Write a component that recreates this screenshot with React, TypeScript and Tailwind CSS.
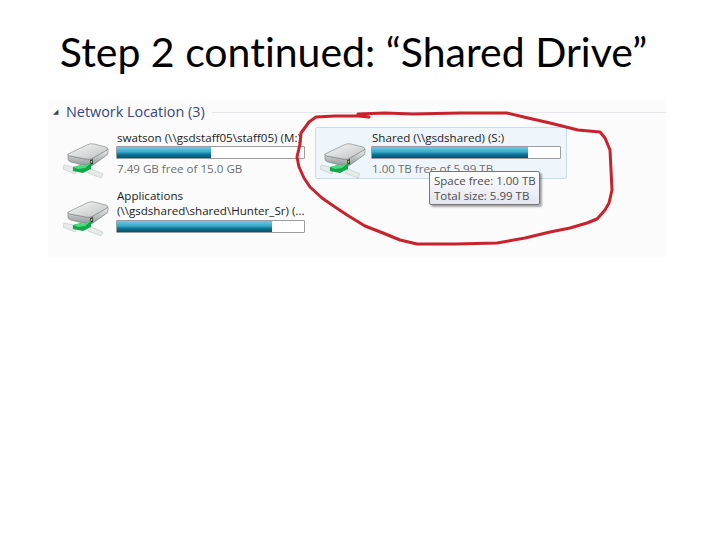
import React from "react";

const uiFont = "font-['Open_Sans','Noto_Sans',sans-serif]";

function DriveIcon() {
  return (
    <svg width="46" height="36" viewBox="0 0 46 36" className="mt-[13px] shrink-0">
      <defs>
        <linearGradient id="top" x1="0" y1="0" x2="1" y2="1">
          <stop offset="0" stopColor="#fafafa" />
          <stop offset="1" stopColor="#bcc0c0" />
        </linearGradient>
        <linearGradient id="side" x1="0" y1="0" x2="0" y2="1">
          <stop offset="0" stopColor="#f0f1f1" />
          <stop offset="1" stopColor="#8e9394" />
        </linearGradient>
      </defs>
      {/* network cable */}
      <path d="M1 22 L10 24 L10 28 L13 29 L12 31 L0 26Z" fill="#e6eaea" stroke="#b5bcbc" strokeWidth="0.5" />
      <path d="M28 26 L40 31 L38 35 L25 30Z" fill="#e6eaea" stroke="#b5bcbc" strokeWidth="0.5" />
      {/* disk */}
      <path d="M5 11 L5 16 Q5 18 8 19 L24 23 Q27 24 30 22 L44 12 Q45 11 45 9 L45 6 L30 15 Q27 17 23 16 L7 13Z" fill="url(#side)" stroke="#6e7475" strokeWidth="0.6" />
      <path d="M5 11 L24 2 Q27 0 31 1 L43 4 Q46 5 44 7 L30 15 Q27 17 23 16 L7 13 Q4 12 5 11Z" fill="url(#top)" stroke="#777d7e" strokeWidth="0.6" />
      <path d="M27 17 L30 16 L30 21 L27 22Z" fill="#333b35" />
      <path d="M27.8 18 L29.2 17.5 L29.2 19.5 L27.8 20Z" fill="#a6e070" />
      {/* green connector */}
      <path d="M10 24 L18 22 L20 23 L28 20 L28 26 L20 30 L10 28Z" fill="#12a84a" />
      <path d="M10 24 L18 22 L20 23 L28 20 L22 25 L15 26Z" fill="#49dc7e" />
    </svg>
  );
}

function Bar({ fill }: { fill: string }) {
  return (
    <div className="h-[13px] w-full rounded-[1px] border border-[#9a9c9e] bg-white">
      <div
        className="h-full bg-[linear-gradient(to_bottom,#6ccbe0_0%,#3aa9c9_45%,#0f7898_65%,#064f6e_100%)]"
        style={{ width: fill }}
      />
    </div>
  );
}

function Tile(props: { name: string[]; fill: string; sub?: string; selected?: boolean }) {
  return (
    <div
      className={`flex h-[52px] items-start rounded-[2px] border pl-[4px] pr-[5px] pt-[2px] ${
        props.selected ? "gap-[5px] border-[#c4dcec] bg-[#eef6fc]" : "gap-[7px] border-transparent"
      }`}
    >
      <DriveIcon />
      <div className="min-w-0 flex-1 text-[11.6px] leading-[15px] text-[#1c1c1c]">
        {props.name.map((line) => (
          <div key={line} className="h-[15px] whitespace-nowrap pl-[1px]">
            {line}
          </div>
        ))}
        <div className={props.name.length > 1 ? "mt-[2px]" : "mt-[1px]"}>
          <Bar fill={props.fill} />
        </div>
        {props.sub && (
          <div className="mt-[2px] whitespace-nowrap pl-[1px] text-[#6f6f6f]">{props.sub}</div>
        )}
      </div>
    </div>
  );
}

export default function App() {
  return (
    <div className="relative h-[540px] w-[720px] overflow-hidden bg-white">
      <h1 className="pr-[13px] pt-[26px] text-center font-['Lato','Open_Sans',sans-serif] text-[41px] leading-[52px] text-black [font-variant-ligatures:none]">
        Step 2 continued: “Shared Drive”
      </h1>

      <div className={`relative ml-[48px] mt-[22px] h-[157px] w-[618px] bg-[#fbfbfb] pl-[5px] pt-[3px] ${uiFont}`}>
        <div className="flex items-center">
          <span className="w-[13px] text-[7px] text-[#444]">◢</span>
          <span className="mr-[7px] whitespace-nowrap text-[14.4px] leading-[18px] text-[#33477f]">Network Location (3)</span>
          <div className="h-px flex-1 bg-[#e3e6ea]" />
        </div>

        <div className="ml-[5px] mt-[6px] grid grid-cols-[253px_252px] gap-x-[4px]">
          <div className="flex flex-col gap-[6px]">
            <Tile name={["swatson (\\\\gsdstaff05\\staff05) (M:)"]} fill="50%" sub="7.49 GB free of 15.0 GB" />
            <Tile name={["Applications", "(\\\\gsdshared\\shared\\Hunter_Sr) (..."]} fill="83%" />
          </div>
          <div className="relative self-start">
            <Tile name={["Shared (\\\\gsdshared) (S:)"]} fill="83%" sub="1.00 TB free of 5.99 TB" selected />
            {/* tooltip */}
            <div className="absolute left-[114px] top-[44px] w-[111px] whitespace-nowrap rounded-[2px] border border-[#767676] bg-[linear-gradient(to_bottom,#ffffff,#e4e5f0)] py-[1px] pl-[4px] text-[11.5px] leading-[15px] text-[#4c4c4c] shadow-[2px_2px_2px_rgba(0,0,0,0.35)]">
              <div>Space free: 1.00 TB</div>
              <div>Total size: 5.99 TB</div>
            </div>
          </div>
        </div>
      </div>

      {/* hand drawn annotation */}
      <svg className="absolute left-0 top-0" width="720" height="540" viewBox="0 0 720 540" fill="none">
        <path
          d="M369 117 L358 116 L358 114 L385 113 L413 114 L460 113 L507 113 L528 118 L550 123 L578 130 L600 132 L605 138 L610 150 L611 170 L612 190 L609 203 L605 210 L597 219 L587 223 L570 228 L550 232 L525 238 L497 243 L455 244 L417 244 L400 240 L383 233 L365 226 L347 215 L335 207 L322 198 L310 187 L304 178 L299 167 L297 157 L300 144 L301 133 L309 122 L316 117 L335 116 L357 116"
          stroke="#c8232c"
          strokeWidth="3"
          strokeLinejoin="round"
          strokeLinecap="round"
        />
      </svg>
    </div>
  );
}
